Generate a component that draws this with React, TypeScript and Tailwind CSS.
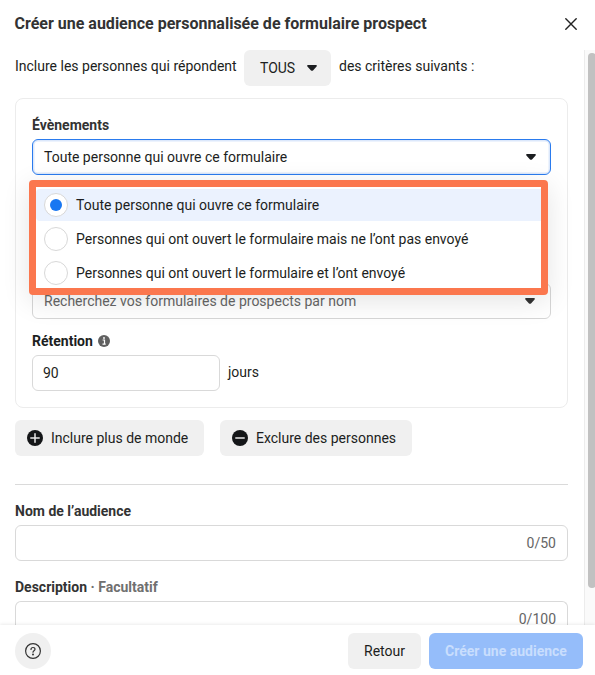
import { useState } from 'react';

const EVENTS = [
  { id: 'open', label: 'Toute personne qui ouvre ce formulaire' },
  { id: 'not-sent', label: 'Personnes qui ont ouvert le formulaire mais ne l’ont pas envoyé' },
  { id: 'sent', label: 'Personnes qui ont ouvert le formulaire et l’ont envoyé' },
];

function Caret({ className = '' }: { className?: string }) {
  return (
    <svg viewBox="0 0 10 6" className={`w-2.5 h-1.5 shrink-0 ${className}`} fill="currentColor">
      <path d="M1 0h8c.8 0 1.2.9.6 1.5L6 5.4c-.6.6-1.4.6-2 0L.4 1.5C-.2.9.2 0 1 0z" />
    </svg>
  );
}

function SignIcon({ plus = false }: { plus?: boolean }) {
  return (
    <svg viewBox="0 0 16 16" className="w-4 h-4 shrink-0">
      <circle cx="8" cy="8" r="8" fill="#141618" />
      <path d={plus ? 'M3.8 8h8.4M8 3.8v8.4' : 'M3.8 8h8.4'} stroke="#e8e8e8" strokeWidth="1.5" strokeLinecap="round" />
    </svg>
  );
}

export default function App() {
  const [selected, setSelected] = useState('open');
  const [days, setDays] = useState('90');

  return (
    <div className="flex flex-col w-[595px] h-[675px] overflow-hidden bg-white font-['Roboto',sans-serif] text-sm leading-5 text-[#1c1e21]">
      {/* Header */}
      <header className="flex items-center justify-between h-[50px] shrink-0 pl-[14.5px] pr-[18px] pb-0.5">
        <h1 className="text-base font-bold text-[#333]">
          Créer une audience personnalisée de formulaire prospect
        </h1>
        <button aria-label="Fermer">
          <svg viewBox="0 0 12 12" className="w-3 h-3" stroke="#222" strokeWidth="1.4" strokeLinecap="round">
            <path d="M.8.8l10.4 10.4M11.2.8L.8 11.2" />
          </svg>
        </button>
      </header>

      {/* Scrollable form */}
      <div className="flex h-[575px] shrink-0 overflow-hidden">
        <main className="flex flex-col w-[584px] shrink-0 pl-[15px] pr-4">
          <div className="flex h-9 shrink-0">
            <span className="w-[229px] pt-1.5 whitespace-nowrap">Inclure les personnes qui répondent</span>
            <button className="flex items-center justify-between w-[87px] h-9 pl-4 pr-3.5 rounded-md bg-[#f0f0f0]">
              TOUS
              <Caret />
            </button>
            <span className="pl-2 pt-1.5 whitespace-nowrap">des critères suivants :</span>
          </div>

          <section className="flex flex-col h-[310px] shrink-0 mt-3 px-4 pt-4 rounded-lg border border-[#ececec]">
            <h2 className="font-bold text-[#333]">Évènements</h2>
            <div className="relative mt-1">
              <button className="flex items-center justify-between w-[519px] h-9 pl-[11px] pr-3.5 rounded-md border border-[#2a7bee] shadow-[inset_0_0_0_1.5px_#dce8fb]">
                {EVENTS[0].label}
                <Caret />
              </button>
              <ul className="absolute z-10 -left-[3px] top-[41px] flex flex-col gap-0.5 w-[519px] h-[115px] pt-0.5 rounded-[4px] border-[7px] border-[#fb774e] bg-white shadow-[0_6px_28px_rgba(0,0,0,0.11)]">
                {EVENTS.map((event) => (
                  <li
                    key={event.id}
                    onClick={() => setSelected(event.id)}
                    className={`flex items-center h-8 shrink-0 gap-2 pl-2 rounded-l-[4px] ${selected === event.id ? 'bg-[#ebf2fe]' : ''}`}
                  >
                    <span className="flex items-center justify-center w-6 h-6 shrink-0 rounded-full border border-[#d8d8d8] bg-white">
                      {selected === event.id && <span className="w-3 h-3 rounded-full bg-[#1877f2]" />}
                    </span>
                    {event.label}
                  </li>
                ))}
              </ul>
            </div>

            <button className="flex items-center justify-between w-[519px] h-9 mt-[108px] pl-[11px] pr-[15px] rounded-md border border-[#d6d6d6] text-[#666]">
              Recherchez vos formulaires de prospects par nom
              <Caret className="text-[#333]" />
            </button>

            <h2 className="flex items-center gap-[5px] mt-3 font-bold">
              Rétention
              <svg viewBox="0 0 12 12" className="w-3 h-3">
                <circle cx="6" cy="6" r="6" fill="#606060" />
                <path d="M4.6 5h1.9v4M4.5 9.1h3.2" stroke="#fff" strokeWidth="1.2" fill="none" />
                <circle cx="6" cy="3" r=".9" fill="#fff" />
              </svg>
            </h2>
            <div className="flex items-center gap-2 mt-1">
              <input
                value={days}
                onChange={(e) => setDays(e.target.value)}
                className="w-[188px] h-9 px-2.5 rounded-md border border-[#d9d9d9]"
              />
              <span className="pb-0.5">jours</span>
            </div>
          </section>

          <div className="flex gap-4 mt-3">
            <button className="flex items-center gap-2 w-[189px] h-9 pl-3 rounded-md bg-[#f0f0f0]">
              <SignIcon plus />
              Inclure plus de monde
            </button>
            <button className="flex items-center gap-2 w-48 h-9 pl-3 rounded-md bg-[#f0f0f0]">
              <SignIcon />
              Exclure des personnes
            </button>
          </div>

          <hr className="mt-7 border-[#dadada]" />

          <h2 className="mt-4 font-bold text-[#333]">Nom de l’audience</h2>
          <div className="flex items-center justify-end h-9 shrink-0 mt-1 pr-[11px] rounded-md border border-[#d9d9d9] text-[#666]">
            0/50
          </div>
          <h2 className="mt-4 font-bold text-[#333]">
            Description <span className="text-[#707070]">· Facultatif</span>
          </h2>
          <div className="flex items-start justify-end h-6 shrink-0 mt-1 pt-[7px] pr-[11px] rounded-t-md border border-b-0 border-[#d9d9d9] text-[#666]">
            <span className="h-4 leading-5">0/100</span>
          </div>
        </main>
        <div className="w-[11px] shrink-0 pt-[3px] pl-[3px] border-l border-[#ececec] bg-[#fafafa]">
          <div className="w-2 h-[535px] rounded-full bg-[#c1c1c1]" />
        </div>
      </div>

      {/* Footer */}
      <footer className="relative flex items-center gap-2 h-[50px] shrink-0 pl-[15px] pr-3 pt-0.5 bg-white shadow-[0_-1px_3px_rgba(0,0,0,0.08)]">
        <button aria-label="Aide" className="flex items-center justify-center w-9 h-9 mr-auto rounded-full bg-[#f0f0f0]">
          <svg viewBox="0 0 16 16" className="w-4 h-4" fill="none" stroke="#333" strokeWidth="1.2" strokeLinecap="round">
            <circle cx="8" cy="8" r="7.4" />
            <path d="M6 6.4c0-1.2.8-1.9 2-1.9s2 .7 2 1.8c0 1.4-2 1.5-2 2.9" />
            <circle cx="8" cy="11.4" r=".4" fill="#333" />
          </svg>
        </button>
        <button className="w-[73px] h-9 rounded-md bg-[#f0f0f0]">Retour</button>
        <button disabled className="w-[154px] h-9 rounded-md bg-[#95bdfa] font-bold text-[#c9defd]">
          Créer une audience
        </button>
      </footer>
    </div>
  );
}
